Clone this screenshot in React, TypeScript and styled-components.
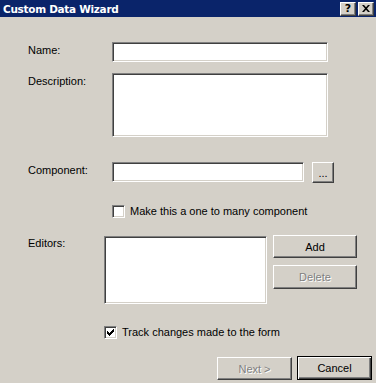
import React from 'react'
import styled, { createGlobalStyle } from 'styled-components'

const GlobalStyle = createGlobalStyle`
  html, body {
    margin: 0;
    padding: 0;
    background: #d4d0c8;
  }
  body {
    font-family: 'Liberation Sans', Arial, sans-serif;
    font-size: 11px;
    color: #000;
  }
`

const Window = styled.div`
  width: 376px;
  height: 383px;
  display: flex;
  flex-direction: column;
  background: #d4d0c8;
  overflow: hidden;
`

const TitleBar = styled.div`
  height: 17px;
  flex: none;
  display: flex;
  align-items: center;
  background: #0a246a;
  padding: 0 2px 0 3px;
`

const Title = styled.div`
  flex: 1;
  color: #fff;
  font-family: 'DejaVu Sans', Verdana, sans-serif;
  font-weight: bold;
  font-size: 10.5px;
  letter-spacing: -0.3px;
`

const CaptionButton = styled.div`
  box-sizing: border-box;
  width: 16px;
  height: 14px;
  margin-left: 2px;
  display: flex;
  align-items: center;
  justify-content: center;
  background: #d4d0c8;
  border: 1px solid;
  border-color: #fff #404040 #404040 #fff;
  box-shadow: inset -1px -1px 0 #808080;
  font-family: 'DejaVu Sans', sans-serif;
  font-weight: bold;
  font-size: 11px;
  line-height: 1;
`

const Body = styled.div`
  flex: 1;
  display: flex;
  flex-direction: column;
  padding-left: 28px;
`

const Row = styled.div<{ $top: number; $indent?: number }>`
  display: flex;
  align-items: flex-start;
  margin-top: ${({ $top }) => $top}px;
  padding-left: ${({ $indent }) => $indent || 0}px;
`

const Label = styled.div<{ $w: number }>`
  width: ${({ $w }) => $w}px;
  flex: none;
  padding-top: 2px;
  line-height: 13px;
`

const Sunken = styled.div<{ $w: number; $h: number; $mt?: number }>`
  box-sizing: border-box;
  width: ${({ $w }) => $w}px;
  height: ${({ $h }) => $h}px;
  margin-top: ${({ $mt }) => $mt || 0}px;
  flex: none;
  background: #fff;
  border: 1px solid;
  border-color: #808080 #fff #fff #808080;
  box-shadow: inset 1px 1px 0 #404040, inset -1px -1px 0 #d4d0c8;
`

const Button = styled.div<{ $w: number; $h: number; $disabled?: boolean; $default?: boolean }>`
  box-sizing: border-box;
  width: ${({ $w }) => $w}px;
  height: ${({ $h }) => $h}px;
  flex: none;
  display: flex;
  align-items: center;
  justify-content: center;
  background: #d4d0c8;
  border: 1px solid;
  border-color: ${({ $default }) => ($default ? '#000' : '#fff #404040 #404040 #fff')};
  box-shadow: ${({ $default }) =>
    $default
      ? 'inset 1px 1px 0 #fff, inset -1px -1px 0 #404040, inset -2px -2px 0 #808080'
      : 'inset -1px -1px 0 #808080'};
  color: ${({ $disabled }) => ($disabled ? '#808080' : '#000')};
  text-shadow: ${({ $disabled }) => ($disabled ? '1px 1px 0 #fff' : 'none')};
  font-size: 11px;
`

const ButtonColumn = styled.div`
  display: flex;
  flex-direction: column;
  gap: 7px;
  margin-left: 6px;
`

const CheckBox = styled.div`
  box-sizing: border-box;
  width: 13px;
  height: 13px;
  flex: none;
  display: flex;
  align-items: center;
  justify-content: center;
  background: #fff;
  border: 1px solid;
  border-color: #808080 #fff #fff #808080;
  box-shadow: inset 1px 1px 0 #404040, inset -1px -1px 0 #d4d0c8;
`

const CheckText = styled.span`
  margin-left: 5px;
  line-height: 13px;
  font-size: 11px;
`

const Footer = styled.div`
  display: flex;
  justify-content: flex-end;
  align-items: flex-end;
  gap: 5px;
  margin-top: 17px;
  padding-right: 4px;
`

const Check: React.FC<{ checked?: boolean }> = ({ checked }) => (
  <CheckBox>
    {checked && (
      <svg width="7" height="7" viewBox="0 0 7 7">
        <path d="M0 2h1v1h1v1h1v-1h1v-1h1v-1h1v-1h1v3h-1v1h-1v1h-1v1h-1v1h-1v-1h-1v-1h-1z" fill="#000" />
      </svg>
    )}
  </CheckBox>
)

export default function App() {
  return (
    <>
      <GlobalStyle />
      <Window>
        <TitleBar>
          <Title>Custom Data Wizard</Title>
          <CaptionButton>?</CaptionButton>
          <CaptionButton>
            <svg width="8" height="7" viewBox="0 0 8 7">
              <path d="M0 0h2l2 2.2L6 0h2L5 3.5 8 7H6L4 4.8 2 7H0l3-3.5z" fill="#000" />
            </svg>
          </CaptionButton>
        </TitleBar>
        <Body>
          <Row $top={25}>
            <Label $w={84}>Name:</Label>
            <Sunken $w={216} $h={20} />
          </Row>
          <Row $top={11}>
            <Label $w={84}>Description:</Label>
            <Sunken $w={216} $h={64} />
          </Row>
          <Row $top={25}>
            <Label $w={84}>Component:</Label>
            <Sunken $w={192} $h={20} />
            <Button $w={22} $h={21} style={{ marginLeft: 8 }}>...</Button>
          </Row>
          <Row $top={22} $indent={84}>
            <Check />
            <CheckText>Make this a one to many component</CheckText>
          </Row>
          <Row $top={17}>
            <Label $w={76}>Editors:</Label>
            <Sunken $w={163} $h={68} $mt={1} />
            <ButtonColumn>
              <Button $w={84} $h={23}>Add</Button>
              <Button $w={84} $h={24} $disabled>Delete</Button>
            </ButtonColumn>
          </Row>
          <Row $top={22} $indent={76}>
            <Check checked />
            <CheckText>Track changes made to the form</CheckText>
          </Row>
          <Footer>
            <Button $w={75} $h={23} $disabled>Next &gt;</Button>
            <Button $w={75} $h={24} $default>Cancel</Button>
          </Footer>
        </Body>
      </Window>
    </>
  )
}
